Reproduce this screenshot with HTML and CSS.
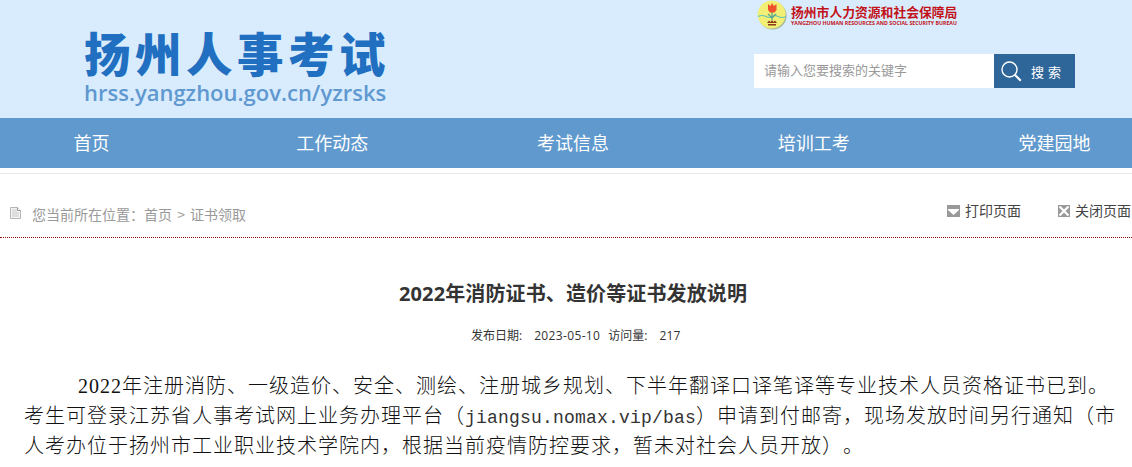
FILE: index.html
```html
<!DOCTYPE html>
<html lang="zh-CN">
<head>
<meta charset="utf-8">
<title>扬州人事考试</title>
<link rel="stylesheet" href="styles.css">
</head>
<body>
<header class="header">
  <div class="brand">
    <div class="brand-name">扬州人事考试</div>
    <div class="brand-url">hrss.yangzhou.gov.cn/yzrsks</div>
  </div>
  <div class="tools">
    <div class="bureau">
      <svg class="emblem" width="30" height="30" viewBox="0 0 30 30">
        <circle cx="15.6" cy="15.6" r="14" fill="#9fb39a"/>
        <circle cx="14.7" cy="14.6" r="14" fill="#f1ef75"/>
        <path d="M1 16.5q4-2 8 0t6 0 6 0 8 0" fill="none" stroke="#62c4b4" stroke-width="1.2"/>
        <path d="M15 11v9M11 14l4 4 4-4" fill="none" stroke="#5aa98c" stroke-width="1.3"/>
        <path d="M11 4l2.500 2 1.500-3 2 3 2.500-2v6l-2 2.500h-4.500L11 10z" fill="#f0512d"/>
        <path d="M10 23l2-2.500 1.500 1.500 1.500-2 1.500 2 1.500-1.500 2 2.500zM11 24h8v1.500h-8z" fill="#8b3a1c"/>
      </svg>
      <div class="bureau-text">
        <div class="bureau-cn">扬州市人力资源和社会保障局</div>
        <div class="bureau-en">YANGZHOU HUMAN RESOURCES AND SOCIAL SECURITY BUREAU</div>
      </div>
    </div>
    <div class="search">
      <div class="search-field">请输入您要搜索的关键字</div>
      <div class="search-button">
        <svg width="22" height="22" viewBox="0 0 22 22" fill="none" stroke="#fff"><circle cx="8.500" cy="8.500" r="7.500" stroke-width="1.400"/><path d="M13.800 13.800l6 6" stroke-width="2"/></svg>
        <span>搜 索</span>
      </div>
    </div>
  </div>
</header>
<nav class="nav"><div class="nav-row"><span>首页</span><span>工作动态</span><span>考试信息</span><span>培训工考</span><span>党建园地</span></div></nav>
<div class="crumbs">
  <svg class="doc" width="11" height="13" viewBox="0 0 11 13"><path d="M.5.500h7l3 3v8H.5z" fill="#f4f4f4" stroke="#b5b5b5"/><path d="M2 2h5v3h2v5H2z" fill="#dedede"/><path d="M7.500.500v3h3" fill="#fff" stroke="#999"/></svg>
  <span class="path">您当前所在位置：首页 &gt; 证书领取</span>
  <span class="action print"><svg width="13" height="12" viewBox="0 0 13 12"><path d="M0 0h13v12H0z" fill="#999"/><path d="M1 4h11v1L6.500 10 1 5z" fill="#fff"/></svg>打印页面</span>
  <span class="action"><svg width="12" height="12" viewBox="0 0 12 12"><path d="M0 0h12v12H0z" fill="#999"/><path d="M1.500 1.500l9 9M10.500 1.500l-9 9" stroke="#fff" stroke-width="2.200"/></svg>关闭页面</span>
</div>
<main class="article">
  <h1 class="title">2022年消防证书、造价等证书发放说明</h1>
  <div class="meta"><span class="m-label">发布日期:</span><span class="m-date">2023-05-10</span><span class="m-label">访问量:</span><span class="m-count">217</span></div>
  <div class="content">
    <div class="line first"><span class="num">2022</span>年注册消防、一级造价、安全、测绘、注册城乡规划、下半年翻译口译笔译等专业技术人员资格证书已到。</div>
    <div class="line">考生可登录江苏省人事考试网上业务办理平台（<span class="url">jiangsu.nomax.vip/bas</span>）申请到付邮寄，现场发放时间另行通知（市</div>
    <div class="line">人考办位于扬州市工业职业技术学院内，根据当前疫情防控要求，暂未对社会人员开放）。</div>
  </div>
</main>
</body>
</html>
```
FILE: styles.css
```css
* { box-sizing: border-box; }
body { margin: 0; width: 1132px; height: 467px; overflow: hidden; background: #fff; color: #333; font-family: "Noto Sans", "Noto Sans CJK SC", sans-serif; white-space: nowrap; text-spacing-trim: space-all; }
svg { display: block; flex: none; }
.header { height: 118px; background: #d8ecfe; display: flex; padding-left: 84px; }
.brand { width: 670px; padding-top: 25px; }
.brand-name { font: 900 46.500px/54px "Noto Sans CJK SC", sans-serif; letter-spacing: 4.500px; color: #216fc0; }
.brand-url { font: 600 22px/26px "Open Sans", sans-serif; color: #6098d0; }
.tools { width: 321px; }
.bureau { display: flex; height: 54px; padding-left: 3px; gap: 4px; }
.bureau-text { padding-top: 4px; color: #c3131a; }
.bureau-cn { font: 700 12.8px/15px "Noto Sans CJK SC", sans-serif; }
.bureau-en { font: 700 5.250px/8px "Open Sans", sans-serif; }
.search { display: flex; height: 34px; }
.search-field { width: 240px; background: #fff; color: #999; padding-left: 10px; font: 13px/32px "Noto Sans CJK SC", sans-serif; }
.search-button { width: 81px; background: #2f6699; color: #fff; display: flex; padding: 7px 0 0 7px; gap: 8px; font: 13px/22px "Noto Sans CJK SC", sans-serif; }
.search-button span { word-spacing: 1px; }
.nav { height: 50px; background: #6099cd; overflow: hidden; }
.nav-row { display: flex; width: 1204px; margin-left: -29px; color: #fff; font: 18px/49px "Noto Sans CJK SC", sans-serif; }
.nav-row span { flex: 1; text-align: center; }
.crumbs { display: flex; height: 65px; margin-top: 5px; border-top: 1px solid #e8e8e8; border-bottom: 1px dotted #8b1010; padding: 33px 0 0 10px; }
.path { margin-left: 11px; width: 915px; font: 14px/15px "Noto Sans CJK SC", sans-serif; word-spacing: 2px; color: #999; }
.action { display: flex; gap: 5px; height: 12px; font: 14px/10px "Noto Sans CJK SC", sans-serif; color: #444; margin-top: -2px; }
.print { width: 111px; }
.article { padding: 40px 0 0 24px; }
.title { margin: 0; padding-left: 375px; font: 700 20px/32px "Open Sans", "Noto Sans CJK SC", sans-serif; letter-spacing: .12px; color: #333; }
.meta { display: flex; margin-top: 16px; padding-left: 447px; font: 12px/20px "Open Sans", "Noto Sans CJK SC", sans-serif; }
.m-label { margin-right: 12px; }
.m-date { margin-right: 8px; letter-spacing: .350px; }
.m-count { letter-spacing: .200px; }
.content { margin-top: 24px; color: #111; font: 300 20px/30px "Noto Sans CJK SC", sans-serif; letter-spacing: 1px; }
.line { height: 30px; }
.first { padding-left: 54px; }
.num { font-family: "Liberation Serif", serif; }
.url { font: 18px/20px "Liberation Mono", monospace; letter-spacing: .2px; color: #333; }
```
